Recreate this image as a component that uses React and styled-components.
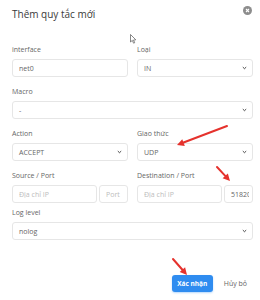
import React from 'react'
import styled, { createGlobalStyle } from 'styled-components'

const Global = createGlobalStyle`
  html, body {
    margin: 0;
    padding: 0;
    background: #fff;
  }
  body {
    font-family: "Open Sans", "Liberation Sans", sans-serif;
  }
`

const Modal = styled.div`
  position: relative;
  width: 260px;
  height: 300px;
  box-sizing: border-box;
  padding: 0 7px 0 12px;
  background: #fff;
  overflow: hidden;
`

const Header = styled.div`
  height: 28px;
  display: flex;
  align-items: center;
  justify-content: space-between;
  margin-bottom: 17px;
`

const Title = styled.h2`
  margin: 0;
  font-size: 10px;
  font-weight: 400;
  color: #3a3a3a;
  line-height: 12px;
`

const CloseBtn = styled.button`
  width: 9px;
  height: 9px;
  margin: -8px 1px 0 0;
  padding: 0;
  border: none;
  border-radius: 50%;
  background: #8d8d8d;
  display: flex;
  align-items: center;
  justify-content: center;
  cursor: pointer;
`

const Row = styled.div`
  display: grid;
  grid-template-columns: ${p => (p.$single ? '1fr' : '1fr 1fr')};
  column-gap: 9px;
  margin-bottom: ${p => p.$gap ?? 10}px;
`

const Field = styled.div`
  display: flex;
  flex-direction: column;
  min-width: 0;
`

const Label = styled.label`
  font-size: 7px;
  line-height: 10px;
  color: #666;
  margin-bottom: 4px;
`

const Box = styled.div`
  box-sizing: border-box;
  height: 18px;
  border: 1px solid #e6e6e6;
  border-radius: 3px;
  padding: 0 5px 0 6px;
  display: flex;
  align-items: center;
  justify-content: space-between;
  font-size: 7px;
  color: #666;
`

const Input = styled.input`
  box-sizing: border-box;
  height: 18px;
  width: 100%;
  min-width: 0;
  border: 1px solid #e6e6e6;
  border-radius: 3px;
  padding: 0 ${p => (p.$tight ? 3 : 5)}px 0 6px;
  font-family: inherit;
  font-size: 7px;
  color: #666;
  outline: none;
  background: #fff;
  &::placeholder {
    color: #bcbcbc;
  }
`

const Pair = styled.div`
  display: grid;
  grid-template-columns: 1fr 29px;
  column-gap: 2px;
`

const Footer = styled.div`
  display: flex;
  justify-content: flex-end;
  align-items: center;
  gap: 11px;
  margin-top: 35px;
  padding-right: 6px;
`

const PrimaryButton = styled.button`
  width: 41px;
  height: 17px;
  border: none;
  border-radius: 3px;
  background: #2f8cf0;
  color: #fff;
  font-family: inherit;
  font-size: 6.5px;
  font-weight: 700;
  padding: 0;
  box-shadow: 0 1px 2px rgba(47, 140, 240, 0.35);
`

const TextButton = styled.button`
  border: none;
  background: none;
  padding: 0;
  font-family: inherit;
  font-size: 7px;
  color: #666;
`

const Overlay = styled.svg`
  position: absolute;
  left: 0;
  top: 0;
  pointer-events: none;
`

const Chevron = () => (
  <svg width="5" height="4" viewBox="0 0 5 4">
    <path d="M0.8 1.1 L2.5 2.7 L4.2 1.1" fill="none" stroke="#333" strokeWidth="0.9" />
  </svg>
)

const Select = ({ value }) => (
  <Box>
    <span>{value}</span>
    <Chevron />
  </Box>
)

const Arrow = ({ x1, y1, x2, y2 }) => {
  const a = Math.atan2(y2 - y1, x2 - x1)
  const len = 7
  const w = 3.6
  const bx = x2 - len * Math.cos(a)
  const by = y2 - len * Math.sin(a)
  const px = -Math.sin(a) * w
  const py = Math.cos(a) * w
  return (
    <g>
      <line x1={x1} y1={y1} x2={bx} y2={by} stroke="#e5322d" strokeWidth="2" strokeLinecap="round" />
      <polygon points={`${x2},${y2} ${bx + px},${by + py} ${bx - px},${by - py}`} fill="#e5322d" />
    </g>
  )
}

export default function App() {
  return (
    <>
      <Global />
      <Modal>
        <Header>
          <Title>Thêm quy tắc mới</Title>
          <CloseBtn aria-label="close">
            <svg width="5" height="5" viewBox="0 0 5 5">
              <path d="M1 1 L4 4 M4 1 L1 4" stroke="#fff" strokeWidth="1.1" />
            </svg>
          </CloseBtn>
        </Header>

        <Row>
          <Field>
            <Label>interface</Label>
            <Input readOnly value="net0" />
          </Field>
          <Field>
            <Label>Loại</Label>
            <Select value="IN" />
          </Field>
        </Row>

        <Row $single>
          <Field>
            <Label>Macro</Label>
            <Select value="-" />
          </Field>
        </Row>

        <Row>
          <Field>
            <Label>Action</Label>
            <Select value="ACCEPT" />
          </Field>
          <Field>
            <Label>Giao thức</Label>
            <Select value="UDP" />
          </Field>
        </Row>

        <Row $gap={5}>
          <Field>
            <Label>Source / Port</Label>
            <Pair>
              <Input placeholder="Địa chỉ IP" />
              <Input placeholder="Port" />
            </Pair>
          </Field>
          <Field>
            <Label>Destination / Port</Label>
            <Pair>
              <Input placeholder="Địa chỉ IP" />
              <Input $tight readOnly value="51820" />
            </Pair>
          </Field>
        </Row>

        <Row $single $gap={0}>
          <Field>
            <Label>Log level</Label>
            <Select value="nolog" />
          </Field>
        </Row>

        <Footer>
          <PrimaryButton>Xác nhận</PrimaryButton>
          <TextButton>Hủy bỏ</TextButton>
        </Footer>

        <Overlay width="260" height="300" viewBox="0 0 260 300">
          <path
            d="M130.5 34.5 L130.5 42 L132.3 40.4 L133.6 43.2 L134.7 42.7 L133.5 40 L135.8 39.8 Z"
            fill="#fff"
            stroke="#555"
            strokeWidth="0.7"
            strokeLinejoin="round"
          />
          <Arrow x1={227} y1={126} x2={177} y2={145} />
          <Arrow x1={217} y1={167} x2={230} y2={181} />
          <Arrow x1={173} y1={259} x2={187} y2={275} />
        </Overlay>
      </Modal>
    </>
  )
}
